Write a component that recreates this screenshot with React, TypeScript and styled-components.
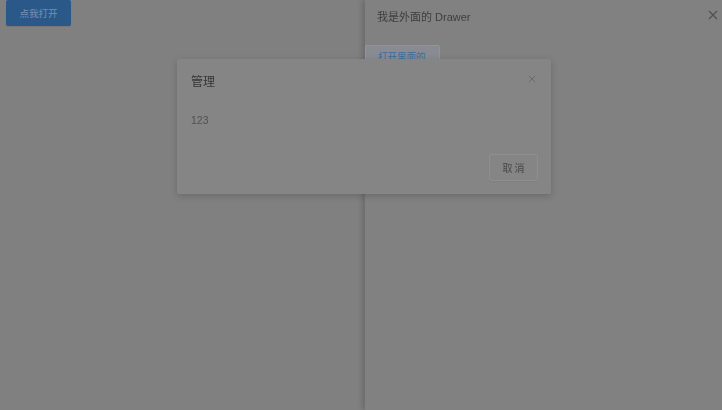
import React from "react";
import styled, { createGlobalStyle } from "styled-components";

const Global = createGlobalStyle`
  html, body { margin: 0; padding: 0; background: #808080; }
  body { font-family: "Liberation Sans", "Noto Sans CJK SC", sans-serif; width: 722px; height: 410px; overflow: hidden; }
`;

const Page = styled.div`
  padding: 0 0 0 6px;
`;

const PrimaryButton = styled.button`
  display: flex;
  align-items: center;
  justify-content: center;
  width: 65px;
  height: 26px;
  border: none;
  border-radius: 2px;
  background: #2a5989;
  color: #7791af;
  font-family: "Noto Sans CJK SC", sans-serif;
  font-size: 9.5px;
  padding: 0;
  box-shadow: 0 1px 1px rgba(0, 0, 0, 0.08);
`;

const Drawer = styled.aside`
  position: fixed;
  top: 0;
  right: 0;
  width: 357px;
  height: 410px;
  background: #818181;
  box-shadow: -3px 0 5px rgba(0, 0, 0, 0.16);
  display: flex;
  flex-direction: column;
`;

const DrawerHeader = styled.div`
  height: 32px;
  display: flex;
  align-items: center;
  justify-content: space-between;
  padding: 0 4px 0 12px;
`;

const DrawerTitle = styled.div`
  font-family: "Liberation Sans", "Noto Sans CJK SC", sans-serif;
  font-size: 11px;
  color: #3e3e3e;
`;

const CloseIcon = styled.svg<{ $size: number; $color: string }>`
  width: ${(p) => p.$size}px;
  height: ${(p) => p.$size}px;
  display: block;
  stroke: ${(p) => p.$color};
`;

const DrawerClose = styled.div`
  margin-top: -2px;
`;

const DrawerBody = styled.div`
  padding: 13px 0 0 0;
`;

const PlainButton = styled.button`
  height: 22px;
  padding: 0 13px 0 12px;
  border: 1px solid #8d95a0;
  border-radius: 2px;
  background: #888c92;
  color: #3d6a9c;
  font-family: "Noto Sans CJK SC", sans-serif;
  font-size: 9.5px;
  display: flex;
  align-items: center;
  white-space: nowrap;
`;

const Dialog = styled.div`
  position: fixed;
  left: 177px;
  top: 59px;
  width: 374px;
  height: 135px;
  box-sizing: border-box;
  background: #858585;
  border-radius: 2px;
  box-shadow: 0 2px 7px rgba(0, 0, 0, 0.18);
  display: flex;
  flex-direction: column;
`;

const DialogHeader = styled.div`
  display: flex;
  align-items: flex-start;
  justify-content: space-between;
  padding: 14px 14px 0 14px;
`;

const DialogTitle = styled.div`
  font-family: "Noto Sans CJK SC", sans-serif;
  font-size: 12px;
  line-height: 16px;
  color: #353535;
`;

const DialogClose = styled.div`
  padding-top: 2px;
  margin-right: 1px;
`;

const DialogBody = styled.div`
  padding: 24px 14px 0 14px;
  font-family: "Liberation Sans", sans-serif;
  font-size: 10.5px;
  line-height: 14px;
  color: #505050;
`;

const DialogFooter = styled.div`
  margin-top: auto;
  display: flex;
  justify-content: flex-end;
  padding: 0 13px 13px 0;
`;

const DefaultButton = styled.button`
  width: 49px;
  height: 27px;
  box-sizing: border-box;
  border: 1px solid #8f8f8f;
  border-radius: 2px;
  background: #858585;
  color: #484848;
  font-family: "Noto Sans CJK SC", sans-serif;
  font-size: 10px;
  letter-spacing: 2px;
  padding: 0 0 0 2px;
  box-shadow: 0 1px 1px rgba(0, 0, 0, 0.04);
`;

const X = ({ size, color, width }: { size: number; color: string; width: number }) => (
  <CloseIcon $size={size} $color={color} viewBox="0 0 10 10" fill="none" strokeWidth={width}>
    <path d="M1 1 L9 9 M9 1 L1 9" />
  </CloseIcon>
);

export default function App() {
  return (
    <>
      <Global />
      <Page>
        <PrimaryButton>点我打开</PrimaryButton>
      </Page>
      <Drawer>
        <DrawerHeader>
          <DrawerTitle>我是外面的 Drawer</DrawerTitle>
          <DrawerClose>
            <X size={10} color="#505050" width={1.1} />
          </DrawerClose>
        </DrawerHeader>
        <DrawerBody>
          <PlainButton>打开里面的</PlainButton>
        </DrawerBody>
      </Drawer>
      <Dialog>
        <DialogHeader>
          <DialogTitle>管理</DialogTitle>
          <DialogClose>
            <X size={8} color="#666" width={1.1} />
          </DialogClose>
        </DialogHeader>
        <DialogBody>123</DialogBody>
        <DialogFooter>
          <DefaultButton>取消</DefaultButton>
        </DialogFooter>
      </Dialog>
    </>
  );
}
